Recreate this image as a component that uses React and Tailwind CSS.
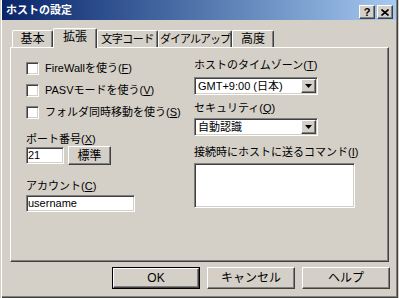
import React from "react";

const FONT = "font-['Liberation_Sans','Noto_Sans_CJK_JP',sans-serif]";
const raised =
  "border border-t-white border-l-white border-r-[#404040] border-b-[#404040] shadow-[inset_-1px_-1px_#808080]";
const sunken =
  "border border-t-[#808080] border-l-[#808080] border-r-white border-b-white shadow-[inset_1px_1px_#404040,inset_-1px_-1px_#d4d0c8]";

const TABS = [
  { label: "基本", w: "w-[41px]", size: "text-[12px]" },
  { label: "拡張", w: "w-[44px]", size: "text-[12px]", active: true },
  { label: "文字コード", w: "w-[61px]", size: "text-[11px] tracking-[-0.5px]" },
  { label: "ダイアルアップ", w: "w-[74px]", size: "text-[11px] tracking-[-1px]" },
  { label: "高度", w: "w-[42px]", size: "text-[12px]" },
];

function Tab({ label, w, size, active }) {
  if (active) {
    return (
      <div
        className={`${w} ${size} h-[20px] -mb-[1px] relative z-10 bg-[#d4d0c8] flex items-center justify-center pb-[4px] whitespace-nowrap border-l border-t border-white border-r border-r-[#404040] rounded-t-[2px] shadow-[inset_-1px_0_#808080]`}
      >
        {label}
      </div>
    );
  }
  return (
    <div
      className={`${w} ${size} h-[17px] flex items-center justify-center whitespace-nowrap border-l border-t border-white border-r border-r-[#404040] rounded-t-[2px] shadow-[inset_-1px_0_#808080]`}
    >
      {label}
    </div>
  );
}

function Check({ children }) {
  return (
    <div className="flex items-center h-[13px] gap-[6px]">
      <div className={`w-[13px] h-[13px] bg-white ${sunken}`} />
      <span className="leading-[13px]">{children}</span>
    </div>
  );
}

function Combo({ value }) {
  return (
    <div className={`w-[124px] h-[18px] bg-white p-[1px] flex ${sunken}`}>
      <div className="flex-1 pl-[2px] leading-[14px] whitespace-nowrap overflow-hidden">{value}</div>
      <div className={`w-[15px] h-full bg-[#d4d0c8] flex items-center justify-center ${raised}`}>
        <svg width="7" height="4" viewBox="0 0 7 4">
          <path d="M0 0h7L3.5 4z" fill="#000" />
        </svg>
      </div>
    </div>
  );
}

function Button({ children, def }) {
  if (def) {
    return (
      <div className="w-[88px] h-[22px] border border-black">
        <div className={`w-full h-full flex items-center justify-center text-[12px] ${raised}`}>{children}</div>
      </div>
    );
  }
  return (
    <div className={`w-[88px] h-[22px] flex items-center justify-center text-[12px] ${raised}`}>{children}</div>
  );
}

export default function App() {
  return (
    <div className={`w-[399px] h-[298px] bg-[#d4d0c8] text-black ${FONT}`}>
      <div className="w-[398px] h-[298px] flex flex-col px-[2px] pb-[2px] shadow-[inset_1px_0_#d4d0c8,inset_2px_0_#fff,inset_-1px_-1px_#404040,inset_-2px_-2px_#808080]">
        {/* title bar */}
        <div className="h-[20px] flex items-start justify-between bg-linear-to-r from-[#0a246a] to-[#a6caf0] pr-[3px]">
          <span className="pl-[4px] pt-[4px] text-[11px] leading-[13px] font-bold text-white">ホストの設定</span>
          <div className="flex gap-[2px] mt-[5px]">
            <div className={`w-[16px] h-[14px] bg-[#d4d0c8] flex items-center justify-center text-[11px] font-bold leading-none ${raised}`}>
              ?
            </div>
            <div className={`w-[16px] h-[14px] bg-[#d4d0c8] flex items-center justify-center ${raised}`}>
              <svg width="8" height="7" viewBox="0 0 8 7">
                <path d="M0.5 0.5l7 6M7.5 0.5l-7 6" stroke="#000" strokeWidth="1.6" />
              </svg>
            </div>
          </div>
        </div>

        {/* body */}
        <div className="flex-1 flex flex-col pt-[8px] text-[11px]">
          <div className="flex items-end h-[19px] ml-[10px]">
            {TABS.map((t) => (
              <Tab key={t.label} {...t} />
            ))}
          </div>

          <div className={`ml-[8px] w-[379px] h-[215px] flex ${raised}`}>
            {/* left column */}
            <div className="w-[183px] pl-[15px] pt-[14px] flex flex-col">
              <div className="flex flex-col gap-[9px]">
                <Check>
                  FireWallを使う(<u>F</u>)
                </Check>
                <Check>
                  PASVモードを使う(<u>V</u>)
                </Check>
                <Check>
                  フォルダ同時移動を使う(<u>S</u>)
                </Check>
              </div>
              <div className="mt-[13px] h-[14px] leading-[14px]">
                ポート番号(<u>X</u>)
              </div>
              <div className="flex items-center gap-[4px] h-[19px]">
                <div className={`w-[38px] h-[17px] bg-white pl-[1px] leading-[14px] ${sunken}`}>21</div>
                <div className={`w-[43px] h-[19px] flex items-center justify-center text-[12px] ${raised}`}>標準</div>
              </div>
              <div className="mt-[14px] h-[14px] leading-[14px]">
                アカウント(<u>C</u>)
              </div>
              <div className={`mt-[2px] w-[109px] h-[17px] bg-white pl-[1px] leading-[14px] ${sunken}`}>username</div>
            </div>

            {/* right column */}
            <div className="pt-[10px] flex flex-col">
              <div className="h-[14px] leading-[14px]">
                ホストのタイムゾーン(<u>T</u>)
              </div>
              <div className="mt-[5px]">
                <Combo value="GMT+9:00 (日本)" />
              </div>
              <div className="mt-[6px] h-[14px] leading-[14px]">
                セキュリティ(<u>Q</u>)
              </div>
              <div className="mt-[3px]">
                <Combo value="自動認識" />
              </div>
              <div className="mt-[9px] h-[14px] leading-[14px]">
                接続時にホストに送るコマンド(<u>I</u>)
              </div>
              <div className={`mt-[4px] w-[161px] h-[45px] bg-white ${sunken}`} />
            </div>
          </div>

          <div className="mt-[5px] ml-[110px] flex gap-[7px]">
            <Button def>OK</Button>
            <Button>キャンセル</Button>
            <Button>ヘルプ</Button>
          </div>
        </div>
      </div>
    </div>
  );
}
